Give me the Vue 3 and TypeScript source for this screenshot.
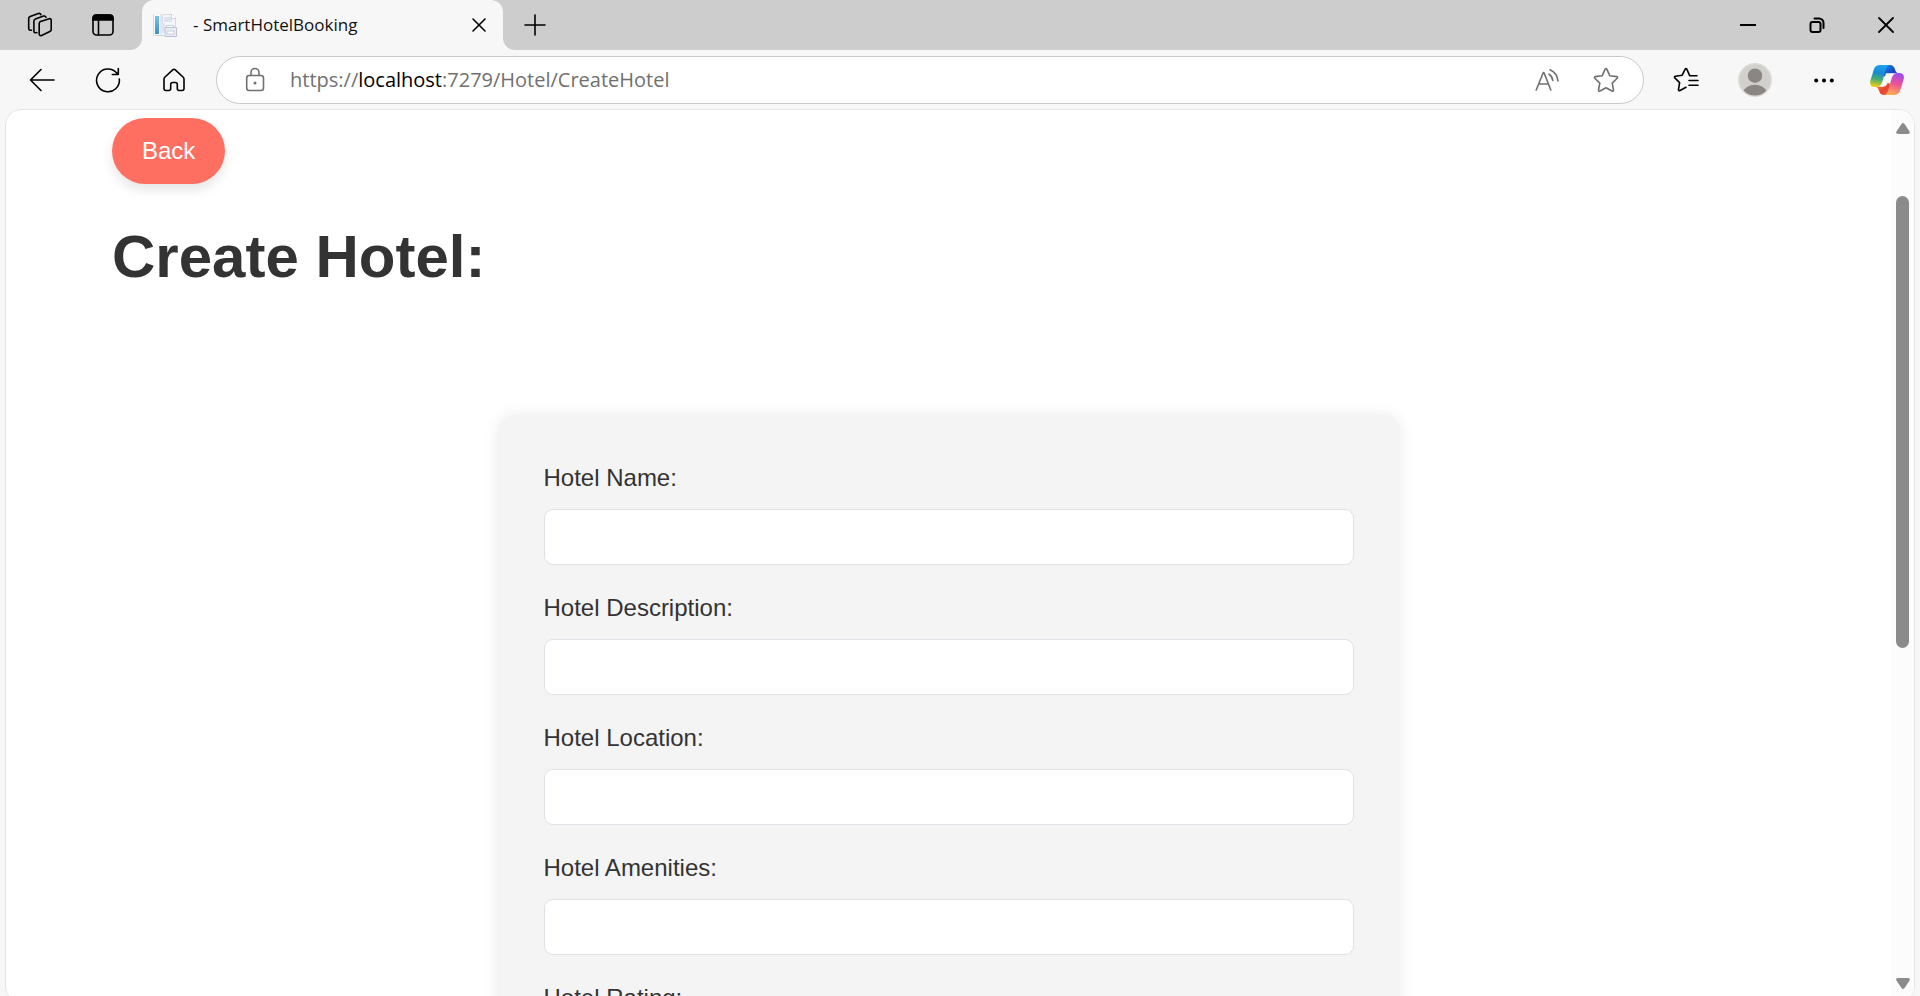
<script setup lang="ts">
import { ref } from 'vue'

interface Field {
  id: string
  label: string
}

const fields: Field[] = [
  { id: 'hotel-name', label: 'Hotel Name:' },
  { id: 'hotel-description', label: 'Hotel Description:' },
  { id: 'hotel-location', label: 'Hotel Location:' },
  { id: 'hotel-amenities', label: 'Hotel Amenities:' },
  { id: 'hotel-rating', label: 'Hotel Rating:' },
]

const values = ref<Record<string, string>>({})

const address = { scheme: 'https://', host: 'localhost', rest: ':7279/Hotel/CreateHotel' }
const editing = ref(false)
</script>

<template>
  <div class="browser">
    <header class="tab-strip">
      <div class="strip-start">
        <button class="strip-btn" type="button" aria-label="Workspaces">
          <svg class="icon" width="26" height="26" viewBox="0 0 26 26">
            <path d="M13.5 9.6 22.3 6.7Q24.2 6.3 24.2 8.3V17.6Q24.2 19 22.8 19.6L14.6 23.4Q12.2 24.2 12.2 21.8V11.6Q12.2 10.1 13.5 9.6Z" />
            <path d="M9.9 20.6Q6.900 21.4 6.900 19V9.200Q6.900 7.600 8.400 7L16.500 4.100Q18.400 3.600 19 5.200" />
            <path d="M4.500 18.200Q1.700 18.600 1.700 16.200V6.500Q1.700 5 3.200 4.400L11.300 1.500Q13.200 1 13.900 2.600" />
          </svg>
        </button>
        <button class="strip-btn" type="button" aria-label="Tab actions">
          <svg class="icon" width="24" height="24" viewBox="0 0 24 24">
            <rect x="2" y="2" width="20" height="20" rx="3.500" />
            <path class="solid" d="M2 7V5a3 3 0 0 1 3-3h14a3 3 0 0 1 3 3v2Z" />
            <path d="M7.500 7v15" />
          </svg>
        </button>
      </div>
      <div class="tab-slot">
        <div class="tab">
          <svg width="24" height="24" viewBox="0 0 24 24">
            <defs>
              <linearGradient id="spine" x1="0" y1="0" x2="0" y2="1">
                <stop offset="0" stop-color="#7cc0e6" />
                <stop offset="1" stop-color="#3f8fca" />
              </linearGradient>
            </defs>
            <path d="M1 1h18l4 4v18H1Z" fill="#fafafa" />
            <path d="M.5 1v22" stroke="#d5dae0" />
            <rect x="2" y="3" width="4" height="18" fill="url(#spine)" />
            <path d="M8 1v22M2 22.500h9" stroke="#cfd3da" />
            <path d="M9.500 1.500H19l3.500 3.500V14h-13Z" fill="#f4f6f9" stroke="#d8dbe0" />
            <rect x="11" y="4" width="8" height="5" fill="#dce3ee" />
            <path d="M18.500 1v4.500H23" fill="#fff" stroke="#cdd1d8" />
            <rect x="9" y="10" width="3" height="10" fill="#dfe5ef" />
            <path d="M12 14.500h11.500v9H12Z" fill="#e9edf6" stroke="#bcc3cf" />
            <path d="M13.500 14v-1.500h7V14" fill="#fff" stroke="#c9ced8" />
            <rect x="14" y="18" width="7" height="3" fill="#fff" stroke="#c5cbd9" />
          </svg>
          <span class="tab-title">- SmartHotelBooking</span>
          <button class="tab-close" type="button" aria-label="Close tab">
            <svg class="icon" width="16" height="16" viewBox="0 0 16 16"><path d="m2 2 12 12M14 2 2 14" /></svg>
          </button>
        </div>
      </div>
      <div class="strip-end">
        <button class="new-tab" type="button" aria-label="New tab">
          <svg class="icon" width="22" height="22" viewBox="0 0 22 22"><path d="M11 1v20M1 11h20" /></svg>
        </button>
        <div class="window-controls">
          <button class="window-btn" type="button" aria-label="Minimize">
            <svg class="icon" width="16" height="16" viewBox="0 0 16 16"><path d="M.5 8h15" stroke-width="2" /></svg>
          </button>
          <button class="window-btn" type="button" aria-label="Restore">
            <svg class="icon" width="16" height="16" viewBox="0 0 16 16">
              <rect x="1.500" y="5" width="10" height="10" rx="2" stroke-width="2" />
              <path d="M5.500 1.500H10a4.500 4.500 0 0 1 4.500 4.500v5" stroke-width="2" />
            </svg>
          </button>
          <button class="window-btn" type="button" aria-label="Close">
            <svg class="icon" width="16" height="16" viewBox="0 0 16 16"><path d="m1 1 14 14M15 1 1 15" stroke-width="1.800" /></svg>
          </button>
        </div>
      </div>
    </header>

    <nav class="toolbar" aria-label="Browser toolbar">
      <button class="nav-btn" type="button" aria-label="Go back">
        <svg class="icon" width="26" height="26" viewBox="0 0 26 26"><path d="M25 13H1.500M12 2.500 1.500 13 12 23.500" /></svg>
      </button>
      <button class="nav-btn" type="button" aria-label="Refresh">
        <svg class="icon" width="26" height="26" viewBox="0 0 26 26">
          <path d="M24.300 12A11.400 11.400 0 1 1 21.500 5.800L23 7.500M23.300 1.500v6h-6" />
        </svg>
      </button>
      <button class="nav-btn" type="button" aria-label="Home">
        <svg class="icon" width="24" height="24" viewBox="0 0 24 24">
          <path d="M2 11.200Q2 10 3 9L10.700 1.800Q12 .7 13.300 1.800L21 9Q22 10 22 11.200V20.500Q22 22.500 20 22.500H17.200Q15.300 22.500 15.300 20.500V16.500Q15.300 14.500 13.300 14.500H10.700Q8.700 14.500 8.700 16.500V20.500Q8.700 22.500 6.800 22.500H4Q2 22.500 2 20.500Z" />
        </svg>
      </button>
      <div class="address-bar">
        <svg class="icon muted lock" width="24" height="26" viewBox="0 0 24 26">
          <rect x="3.700" y="8.500" width="16.800" height="15" rx="2.500" />
          <path d="M8 8.500V5.500a4 4 0 0 1 8 0v3" />
          <circle class="dot" cx="12" cy="16" r="1.500" />
        </svg>
        <div class="address">
          <input
            class="address-input"
            type="text"
            aria-label="Address"
            :value="editing ? address.scheme + address.host + address.rest : ''"
            @focus="editing = true"
            @blur="editing = false"
          />
          <span v-if="!editing" class="address-text">{{ address.scheme }}<b class="host">{{ address.host }}</b>{{ address.rest }}</span>
        </div>
        <button class="address-btn" type="button" aria-label="Read aloud">
          <svg class="icon muted" width="24" height="24" viewBox="0 0 24 24">
            <path d="M1.200 22 8.300 4.500h.6L15.800 22M4 16h9.200" />
            <path d="M14 6.200q3.300 2 3.800 6.300M15 1.800q7 3 8 11.200" />
          </svg>
        </button>
        <button class="address-btn" type="button" aria-label="Add to favorites">
          <svg class="icon muted" width="26" height="26" viewBox="0 0 26 26">
            <path d="M12.100 2.300Q13 1 13.900 2.300L16.800 8.700 23.700 9.600Q25.200 10 24.200 11.200L19.200 16.100 20.500 23Q20.500 24.600 19 24L13 20.700 7 24Q5.500 24.600 5.500 23L6.800 16.100 1.800 11.200Q.8 10 2.300 9.600L9.200 8.700Z" />
          </svg>
        </button>
      </div>
      <div class="actions">
        <button class="action-btn" type="button" aria-label="Favorites">
          <svg class="icon" width="26" height="26" viewBox="0 0 26 26">
            <path d="M24 8.800h-7.200L13.900 2.300Q13 1 12.100 2.300L9.200 8.200 2.300 9.300Q.8 9.700 1.800 10.900L6.600 15.600 5.500 22.500Q5.500 24.200 7 23.500L13 20.300M16 13.500h9M16 18.300h9" />
          </svg>
        </button>
        <button class="action-btn" type="button" aria-label="Profile">
          <svg width="34" height="34" viewBox="0 0 34 34">
            <defs>
              <clipPath id="avatar-clip"><circle cx="17" cy="17" r="15.500" /></clipPath>
            </defs>
            <circle cx="17" cy="17" r="17" fill="#dcdbd8" />
            <circle cx="17" cy="17" r="15.500" fill="#d2d0cd" />
            <circle cx="17" cy="12.700" r="7.200" fill="#8a8683" />
            <ellipse cx="17" cy="32" rx="12.500" ry="10.300" fill="#8a8683" clip-path="url(#avatar-clip)" />
          </svg>
        </button>
        <button class="action-btn" type="button" aria-label="Settings and more">
          <svg width="22" height="6" viewBox="0 0 22 6">
            <circle cx="3.200" cy="3.500" r="2" /><circle cx="11" cy="3.500" r="2" /><circle cx="18.800" cy="3.500" r="2" />
          </svg>
        </button>
        <button class="action-btn copilot" type="button" aria-label="Copilot">
          <svg width="34" height="30" viewBox="0 0 102 90">
            <defs>
              <linearGradient id="cp-left" x1=".5" y1="0" x2=".35" y2="1">
                <stop offset="0" stop-color="#1ba4ee" />
                <stop offset=".35" stop-color="#1789d6" />
                <stop offset=".65" stop-color="#44ad73" />
                <stop offset="1" stop-color="#f5cf12" />
              </linearGradient>
              <linearGradient id="cp-top" x1="0" y1="0" x2="1" y2="1">
                <stop offset="0" stop-color="#168ae0" />
                <stop offset=".6" stop-color="#1a44c8" />
                <stop offset="1" stop-color="#2257d8" />
              </linearGradient>
              <linearGradient id="cp-right" x1=".65" y1="0" x2=".4" y2="1">
                <stop offset="0" stop-color="#9d4df2" />
                <stop offset=".45" stop-color="#ea4f9c" />
                <stop offset="1" stop-color="#ffae52" />
              </linearGradient>
              <linearGradient id="cp-bottom" x1="0" y1="0" x2="1" y2="1">
                <stop offset="0" stop-color="#f58b2e" />
                <stop offset=".6" stop-color="#e8412f" />
                <stop offset="1" stop-color="#f36c4b" />
              </linearGradient>
            </defs>
            <path fill="url(#cp-top)" d="M42 0H60C69 0 72 5 75 13 77 21 80 25 88 25H68C59 25 55 30 52 38L40 32Z" />
            <path fill="url(#cp-bottom)" d="M60 90H42C33 90 30 85 27 77 25 69 22 65 14 65H34C43 65 47 60 50 52L62 58Z" />
            <path fill="#f7f7f7" d="M48 25H68Q61 28 58 37L52 56Q48 65 38 65H32Q38 60 40 50Z" />
            <path fill="url(#cp-left)" d="M30 0H60C52 1 49 8 46 18L37 50C34 60 28 66 18 66H14C3 66-2 58 1 47L11 15C14 5 20 0 30 0Z" />
            <path fill="url(#cp-right)" d="M72 90H42C50 89 53 82 56 72L65 40C68 30 74 24 84 24H88C99 24 104 32 101 43L91 75C88 85 82 90 72 90Z" />
          </svg>
        </button>
      </div>
    </nav>

    <div class="viewport">
      <main class="page">
        <a class="back" href="#">Back</a>
        <h1 class="heading">Create Hotel:</h1>
        <form class="card" @submit.prevent>
          <div v-for="field in fields" :key="field.id" class="field">
            <label class="field-label" :for="field.id">{{ field.label }}</label>
            <input :id="field.id" v-model="values[field.id]" class="field-input" type="text" />
          </div>
        </form>
      </main>
      <div class="scrollbar" aria-hidden="true">
        <svg width="14" height="11" viewBox="0 0 14 11"><path d="M5.500 1Q7-.8 8.500 1L13.600 8.500Q14.400 11 12 11H2Q-.4 11 .4 8.500Z" /></svg>
        <div class="track"><div class="thumb"></div></div>
        <svg width="14" height="11" viewBox="0 0 14 11"><path d="M5.500 10Q7 11.800 8.500 10L13.600 2.500Q14.400 0 12 0H2Q-.4 0 .4 2.500Z" /></svg>
      </div>
    </div>
  </div>
</template>

<style>
body {
  margin: 0;
  background: #f7f7f7;
}
</style>

<style scoped>
* {
  box-sizing: border-box;
}

button {
  display: flex;
  align-items: center;
  justify-content: center;
  padding: 0;
  border: 0;
  background: none;
  color: inherit;
}

svg {
  display: block;
  flex: none;
}

.icon {
  fill: none;
  stroke: #000;
  stroke-width: 1.6;
  stroke-linecap: round;
  stroke-linejoin: round;
}

.icon.muted {
  stroke: #707070;
}

.solid {
  fill: #000;
}

.dot {
  fill: #707070;
  stroke: none;
}

.browser {
  display: flex;
  flex-direction: column;
  height: 100vh;
  overflow: hidden;
  background: #f7f7f7;
  font-family: "Open Sans", "Noto Sans", sans-serif;
}

/* Tab strip */
.tab-strip {
  display: flex;
  flex: none;
  height: 50px;
}

.strip-start,
.strip-end {
  display: flex;
  align-items: center;
  background: #cdcdcd;
}

.strip-start {
  width: 142px;
  padding-left: 8px;
  border-bottom-right-radius: 12px;
}

.strip-btn {
  width: 63px;
  height: 48px;
}

.tab-slot {
  width: 361px;
  background: linear-gradient(#cdcdcd 50%, #f7f7f7 50%);
}

.tab {
  display: flex;
  align-items: center;
  height: 100%;
  padding: 0 8px 0 11px;
  border-radius: 12px 12px 0 0;
  background: #f7f7f7;
}

.tab-title {
  flex: 1;
  margin-left: 16px;
  font-size: 17px;
  line-height: 24px;
  color: #111;
}

.tab-close {
  width: 32px;
  height: 32px;
}

.strip-end {
  flex: 1;
  justify-content: space-between;
  border-bottom-left-radius: 12px;
}

.new-tab {
  width: 64px;
  height: 48px;
}

.window-controls {
  display: flex;
}

.window-btn {
  width: 69px;
  height: 48px;
}

/* Toolbar */
.toolbar {
  display: flex;
  flex: none;
  align-items: center;
  height: 59px;
  padding: 0 4px 0 9px;
}

.nav-btn {
  width: 66px;
  height: 48px;
}

.address-bar {
  display: flex;
  flex: 1;
  align-items: center;
  height: 48px;
  margin: 0 7px 0 9px;
  padding: 0 8px 0 26px;
  border: 1px solid #c9c9c9;
  border-radius: 24px;
  background: #fff;
}

.address {
  position: relative;
  flex: 1;
  height: 32px;
  margin-left: 23px;
  font-size: 20px;
  line-height: 32px;
  color: #707070;
}

.address-input {
  width: 100%;
  height: 100%;
  padding: 0;
  border: 0;
  outline: 0;
  background: none;
  font: inherit;
  color: #000;
}

.address-text {
  position: absolute;
  inset: 0;
  pointer-events: none;
}

.host {
  font-weight: 400;
  color: #000;
}

.address-btn {
  width: 59px;
  height: 40px;
}

.actions {
  display: flex;
}

.action-btn {
  width: 69px;
  height: 48px;
}

.copilot {
  width: 58px;
}

/* Page */
.viewport {
  display: flex;
  flex: 1;
  min-height: 0;
  margin: 0 5px -7px;
  overflow: hidden;
  border: 1px solid #e5e5e5;
  border-radius: 16px;
  background: #fff;
}

.page {
  flex: 1;
  overflow: hidden;
  padding: 8px 106px 0;
  font-family: "Liberation Sans", Arial, sans-serif;
  font-size: 24px;
  line-height: 36px;
  color: #333;
}

.back {
  display: inline-block;
  padding: 15px 30px;
  border-radius: 33px;
  background: #ff6f61;
  box-shadow: 0 6px 12px rgba(0, 0, 0, 0.1);
  color: #fff;
  text-decoration: none;
}

.heading {
  margin: 36px 0 0;
  font-size: 60px;
  line-height: 74px;
  font-weight: 700;
}

.card {
  max-width: 902px;
  margin: 121px auto 0;
  padding: 45px 46px;
  border-radius: 16px;
  background: #f4f4f4;
  box-shadow: 0 0 16px rgba(0, 0, 0, 0.08);
}

.field {
  display: flex;
  flex-direction: column;
  gap: 13px;
  margin-bottom: 25px;
}

.field-input {
  width: 100%;
  height: 56px;
  padding: 0 16px;
  border: 1px solid #dee2e6;
  border-radius: 9px;
  background: #fff;
  font: inherit;
  color: inherit;
}

/* Scrollbar */
.scrollbar {
  display: flex;
  flex: none;
  flex-direction: column;
  align-items: center;
  width: 23px;
  padding: 13px 0;
  background: #fcfcfc;
  fill: #8b8b8b;
}

.track {
  display: grid;
  flex: 1;
  grid-template-rows: 62fr 453fr 330fr;
}

.thumb {
  grid-row: 2;
  width: 13px;
  border-radius: 7px;
  background: #8b8b8b;
}
</style>
